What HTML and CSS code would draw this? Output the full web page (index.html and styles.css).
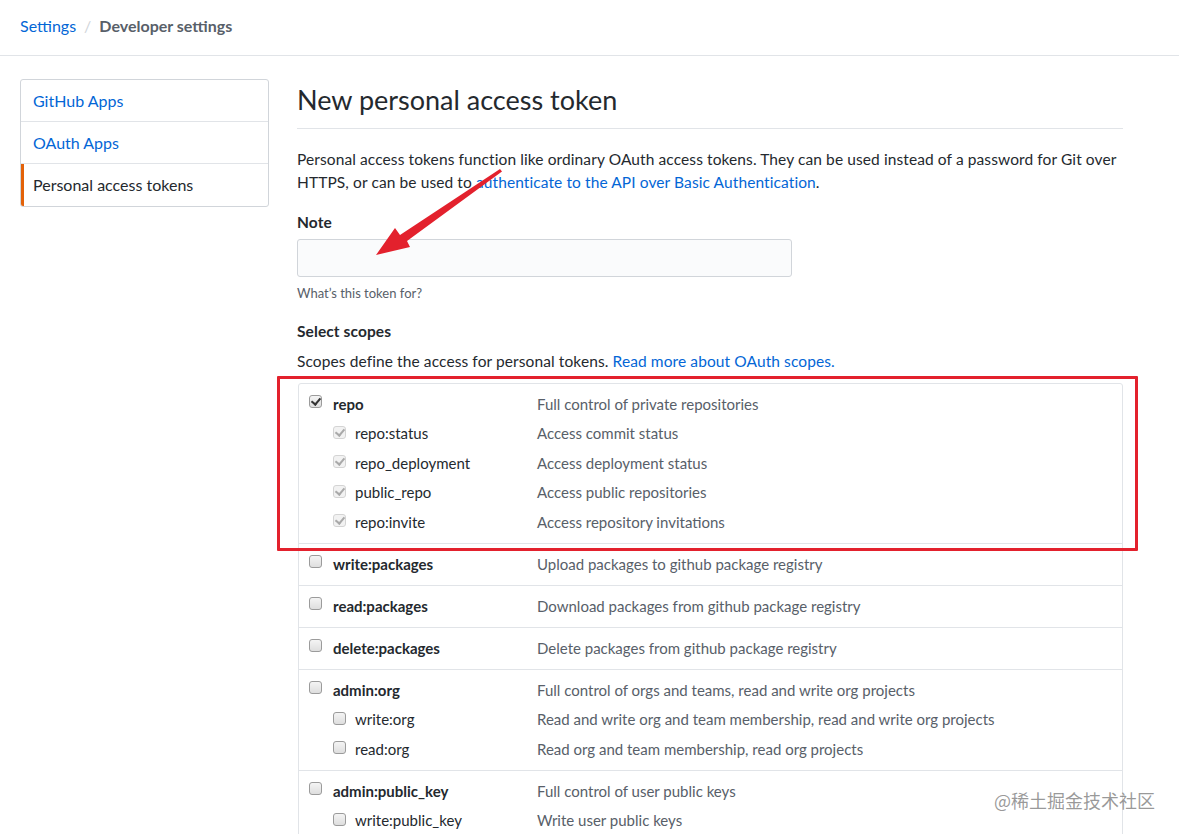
FILE: index.html
```html
<!DOCTYPE html>
<html lang="en">
<head>
<meta charset="utf-8">
<title>New personal access token</title>
<link rel="stylesheet" href="styles.css">
</head>
<body>
<header class="topbar">
  <nav class="crumbs"><a class="crumb-link" href="#">Settings</a><span class="crumb-sep">/</span><span class="crumb-current">Developer settings</span></nav>
</header>
<div class="layout">
  <aside class="sidenav">
    <a class="nav-item" href="#">GitHub Apps</a>
    <a class="nav-item" href="#">OAuth Apps</a>
    <a class="nav-item selected" href="#">Personal access tokens</a>
  </aside>
  <main class="content">
    <h1 class="title">New personal access token</h1>
    <p class="intro">Personal access tokens function like ordinary OAuth access tokens. They can be used instead of a password for Git over HTTPS, or can be used to <a href="#">authenticate to the API over Basic Authentication</a>.</p>
    <label class="field-label">Note</label>
    <input class="note-input" type="text">
    <p class="hint">What’s this token for?</p>
    <h3 class="field-label scopes-label">Select scopes</h3>
    <p class="scopes-desc">Scopes define the access for personal tokens. <a href="#">Read more about OAuth scopes.</a></p>
    <div class="scopes">
      <div class="group">
        <div class="row"><span class="lab"><span class="cb checked"></span><b>repo</b></span><span class="desc">Full control of private repositories</span></div>
        <div class="row sub"><span class="lab"><span class="cb dis"></span>repo:status</span><span class="desc">Access commit status</span></div>
        <div class="row sub"><span class="lab"><span class="cb dis"></span>repo_deployment</span><span class="desc">Access deployment status</span></div>
        <div class="row sub"><span class="lab"><span class="cb dis"></span>public_repo</span><span class="desc">Access public repositories</span></div>
        <div class="row sub"><span class="lab"><span class="cb dis"></span>repo:invite</span><span class="desc">Access repository invitations</span></div>
      </div>
      <div class="group">
        <div class="row"><span class="lab"><span class="cb"></span><b>write:packages</b></span><span class="desc">Upload packages to github package registry</span></div>
      </div>
      <div class="group">
        <div class="row"><span class="lab"><span class="cb"></span><b>read:packages</b></span><span class="desc">Download packages from github package registry</span></div>
      </div>
      <div class="group">
        <div class="row"><span class="lab"><span class="cb"></span><b>delete:packages</b></span><span class="desc">Delete packages from github package registry</span></div>
      </div>
      <div class="group">
        <div class="row"><span class="lab"><span class="cb"></span><b>admin:org</b></span><span class="desc">Full control of orgs and teams, read and write org projects</span></div>
        <div class="row sub"><span class="lab"><span class="cb"></span>write:org</span><span class="desc">Read and write org and team membership, read and write org projects</span></div>
        <div class="row sub"><span class="lab"><span class="cb"></span>read:org</span><span class="desc">Read org and team membership, read org projects</span></div>
      </div>
      <div class="group">
        <div class="row"><span class="lab"><span class="cb"></span><b>admin:public_key</b></span><span class="desc">Full control of user public keys</span></div>
        <div class="row sub"><span class="lab"><span class="cb"></span>write:public_key</span><span class="desc">Write user public keys</span></div>
      </div>
    </div>
  </main>
</div>
<div class="red-box"></div>
<svg class="arrow" width="140" height="100" viewBox="0 0 140 100" aria-hidden="true">
  <polygon points="124,2 126,4.5 31,74 34,80 0,88 19,61 24,68" fill="#e3212d"/>
</svg>
<div class="watermark">@稀土掘金技术社区</div>
</body>
</html>
```
FILE: styles.css
```css
* { box-sizing: border-box; }
html, body { margin: 0; background: #fff; }
body {
  font-family: "Lato", "Noto Sans", "Liberation Sans", sans-serif;
  font-size: 15.5px;
  letter-spacing: 0.1px;
  color: #24292e;
  width: 1179px;
  height: 834px;
  overflow: hidden;
  position: relative;
}
a { color: #0366d6; text-decoration: none; }

.topbar {
  height: 56px;
  border-bottom: 1px solid #e1e4e8;
  padding: 15px 20px 0;
}
.crumbs { font-size: 16px; line-height: 22px; letter-spacing: 0; }
.crumb-sep { color: #d1d5da; margin: 0 8px; }
.crumb-current { color: #586069; font-weight: 700; }

.layout {
  display: flex;
  gap: 28px;
  padding: 23px 0 0 20px;
}
.sidenav {
  width: 249px;
  flex: none;
  border: 1px solid #d1d5da;
  border-radius: 3px;
  align-self: flex-start;
  display: flex;
  flex-direction: column;
  overflow: hidden;
}
.nav-item {
  height: 42px;
  line-height: 41px;
  padding-left: 12px;
  font-size: 16px;
  letter-spacing: 0;
  border-bottom: 1px solid #e1e4e8;
}
.nav-item:last-child { border-bottom: 0; }
.nav-item.selected {
  color: #24292e;
  border-left: 3px solid #e36209;
  padding-left: 9px;
}

.content { width: 826px; flex: none; }
.title {
  margin: 0;
  font-size: 27px;
  font-weight: 400;
  letter-spacing: 0;
  line-height: 42px;
  padding-bottom: 7px;
  border-bottom: 1px solid #e1e4e8;
}
.intro {
  margin: 19px 0 0;
  line-height: 23px;
}
.field-label {
  display: block;
  margin: 17px 0 0;
  font-size: 15.5px;
  font-weight: 700;
  line-height: 23px;
}
.note-input {
  display: block;
  margin-top: 5px;
  width: 495px;
  height: 38px;
  background: #fafbfc;
  border: 1px solid #d1d5da;
  border-radius: 3px;
}
.hint {
  margin: 7px 0 0;
  font-size: 13px;
  letter-spacing: 0;
  line-height: 18px;
  color: #586069;
}
.scopes-label { margin-top: 18px; }
.scopes-desc { margin: 7px 0 0; line-height: 23px; }

.scopes {
  margin-top: 10px;
  margin-left: 1px;
  border: 1px solid #e1e4e8;
  border-radius: 3px;
}
.group {
  padding: 5.75px 0;
  border-bottom: 1px solid #e1e4e8;
}
.row {
  display: grid;
  grid-template-columns: 238px 1fr;
  line-height: 29.5px;
  font-size: 15px;
  letter-spacing: 0;
}
.lab {
  display: flex;
  align-items: center;
  gap: 11px;
  padding-left: 10px;
}
.row.sub .lab { padding-left: 34px; gap: 9px; }
.lab b { font-weight: 700; }
.desc { color: #586069; }

.cb {
  width: 13px;
  height: 13px;
  flex: none;
  border: 1px solid #9b9b9b;
  border-radius: 3px;
  background: linear-gradient(#f4f4f4, #dedede);
  position: relative;
  top: -3px;
}
.row.sub .cb { top: -2px; }
.cb.checked::after, .cb.dis::after {
  content: "";
  position: absolute;
  left: 3px;
  top: 0px;
  width: 4px;
  height: 7px;
  border: solid #333;
  border-width: 0 2px 2px 0;
  transform: rotate(40deg);
}
.cb.dis {
  border-color: #d4d4d4;
  background: #f2f2f2;
}
.cb.dis::after { border-color: #a9a9a9; }

.red-box {
  position: absolute;
  left: 277px;
  top: 376px;
  width: 861px;
  height: 175px;
  border: 3px solid #e3212d;
  border-radius: 1px;
}
.arrow {
  position: absolute;
  left: 376px;
  top: 167px;
}
.watermark {
  position: absolute;
  left: 994px;
  top: 788px;
  font-family: "Noto Sans CJK SC", sans-serif;
  font-size: 18px;
  letter-spacing: 0;
  color: rgba(120, 120, 120, 0.75);
  line-height: 24px;
}
```
